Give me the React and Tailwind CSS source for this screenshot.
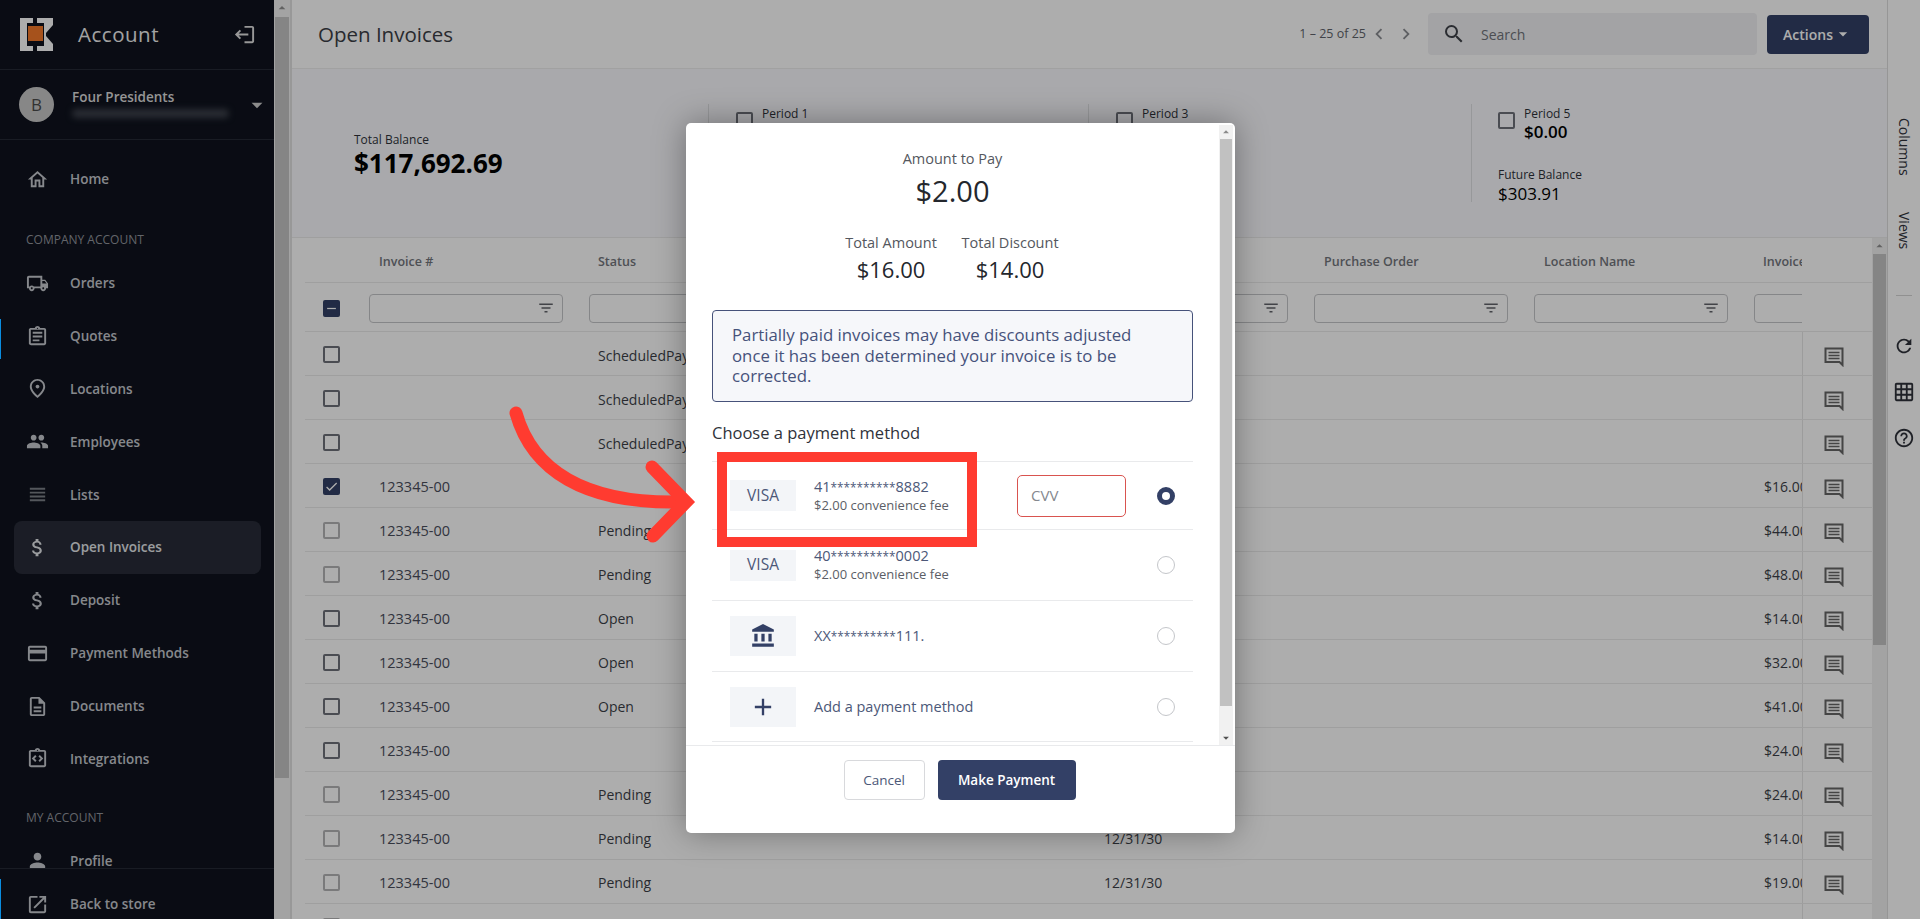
import React from 'react'
import {
  MdOutlineHome, MdOutlineLocalShipping, MdOutlineAssignment, MdOutlinePlace, MdPeople,
  MdOutlineViewHeadline, MdAttachMoney, MdOutlineCreditCard, MdOutlineDescription,
  MdOutlineIntegrationInstructions, MdPerson, MdOpenInNew, MdFilterList,
  MdAccountBalance, MdAdd, MdRefresh, MdOutlineGridOn, MdHelpOutline, MdSearch, MdLogout,
  MdChevronLeft, MdChevronRight, MdArrowDropDown, MdCheck, MdRemove, MdArrowDropUp,
} from 'react-icons/md'

const companyNav = [
  { label: 'Orders', Icon: MdOutlineLocalShipping },
  { label: 'Quotes', Icon: MdOutlineAssignment },
  { label: 'Locations', Icon: MdOutlinePlace },
  { label: 'Employees', Icon: MdPeople },
  { label: 'Lists', Icon: MdOutlineViewHeadline, iconClass: 'opacity-60' },
  { label: 'Open Invoices', Icon: MdAttachMoney, active: true },
  { label: 'Deposit', Icon: MdAttachMoney },
  { label: 'Payment Methods', Icon: MdOutlineCreditCard },
  { label: 'Documents', Icon: MdOutlineDescription },
  { label: 'Integrations', Icon: MdOutlineIntegrationInstructions },
]

const rows = [
  { box: 'dark', status: 'ScheduledPayment' },
  { box: 'dark', status: 'ScheduledPayment' },
  { box: 'dark', status: 'ScheduledPayment' },
  { box: 'checked', inv: '123345-00', amt: '$16.00' },
  { box: 'faded', inv: '123345-00', status: 'Pending', amt: '$44.00' },
  { box: 'faded', inv: '123345-00', status: 'Pending', amt: '$48.00' },
  { box: 'dark', inv: '123345-00', status: 'Open', amt: '$14.00' },
  { box: 'dark', inv: '123345-00', status: 'Open', amt: '$32.00' },
  { box: 'dark', inv: '123345-00', status: 'Open', amt: '$41.00' },
  { box: 'dark', inv: '123345-00', amt: '$24.00' },
  { box: 'faded', inv: '123345-00', status: 'Pending', date: '12/31/30', amt: '$24.00' },
  { box: 'faded', inv: '123345-00', status: 'Pending', date: '12/31/30', amt: '$14.00' },
  { box: 'faded', inv: '123345-00', status: 'Pending', date: '12/31/30', amt: '$19.00' },
  { box: 'faded', inv: '123345-00', status: 'Pending', date: '12/31/30', amt: '$19.00' },
]

function Logo() {
  return (
    <svg width="33" height="33" viewBox="0 0 33 33" className="shrink-0">
      <path d="M0 0H13V5H7V28H13V33H0Z" fill="#ffffff" />
      <path d="M17 0H33V7L26 15V18L33 26V33H17V28H24V5H17Z" fill="#ffffff" />
      <rect x="8" y="8" width="15" height="15" fill="#f5792a" />
    </svg>
  )
}

// square speech bubble with three lines and the tail at the lower right
function NoteIcon() {
  return (
    <svg width="20" height="20" viewBox="0 0 20 20" fill="none" stroke="currentColor">
      <path d="M1.5 1.5H18.5V18L15.5 15H1.5Z" strokeWidth="2" />
      <path d="M4.5 5.5H15.5M4.5 8.5H15.5M4.5 11.5H15.5" strokeWidth="1.5" />
    </svg>
  )
}

function NavItem({ label, Icon, active, iconClass }) {
  return (
    <div className={active
      ? 'ml-[14px] w-[247px] h-[52.85px] pl-[12px] flex items-center rounded-lg bg-[#282c38] text-[#e5e7eb]'
      : 'ml-[14px] w-[247px] h-[52.85px] pl-[12px] flex items-center text-[#c6c9cf]'}>
      <Icon size={23} className={iconClass ? 'shrink-0 ' + iconClass : 'shrink-0'} />
      <span className="ml-[21px] text-[13.5px] font-semibold">{label}</span>
    </div>
  )
}

function Sidebar() {
  return (
    <aside className="relative w-[274px] shrink-0 h-full flex flex-col bg-[#0f131e]">
      <div className="h-[70px] shrink-0 border-b border-[#262a35] flex items-center pl-[20px] pr-[18px]">
        <Logo />
        <span className="ml-[25px] text-[20.5px] text-[#f0f0f0] tracking-wide">Account</span>
        <MdLogout size={23} className="ml-auto -scale-x-100 text-[#e0e0e0]" />
      </div>
      <div className="h-[70px] shrink-0 border-b border-[#262a35] flex items-center pl-[19px] pr-[4px]">
        <div className="w-[35px] h-[35px] rounded-full bg-[#c8c8c8] flex items-center justify-center text-[#4b4b4b] text-[17px]">B</div>
        <div className="ml-[18px] mb-[3px] flex flex-col">
          <span className="text-[13.5px] font-semibold text-[#dcdcdc] leading-[18px]">Four Presidents</span>
          <span className="mt-[3px] w-[157px] h-[9px] rounded-full bg-[#3e424c] blur-[3px]"></span>
        </div>
        <MdArrowDropDown size={26} className="ml-auto text-[#cfcfcf]" />
      </div>
      <nav className="flex-1 overflow-hidden pt-[13px]">
        <NavItem label="Home" Icon={MdOutlineHome} />
        <div className="h-[51px] pt-[22px] pl-[26px] text-[12px] leading-[24px] text-[#92959d]">COMPANY ACCOUNT</div>
        {companyNav.map(item => <NavItem key={item.label} {...item} />)}
        <div className="h-[49px] pt-[21px] pl-[26px] text-[12px] leading-[24px] text-[#92959d]">MY ACCOUNT</div>
        <NavItem label="Profile" Icon={MdPerson} />
      </nav>
      <div className="h-[51px] shrink-0 border-t border-[#262a35] pt-[9px]">
        <NavItem label="Back to store" Icon={MdOpenInNew} />
      </div>
      {/* bright markers stay above the dimmer */}
      <div className="absolute left-0 top-[319px] w-[1px] h-[40px] bg-[#0a8de0] z-20"></div>
      <div className="absolute left-0 top-[879px] w-[1px] h-[40px] bg-[#0a8de0] z-20"></div>
    </aside>
  )
}

function ScrollTrack({ thumbTop, thumbHeight, className }) {
  return (
    <div className={className}>
      <div className="h-[16px] flex items-center justify-center text-[#8f8f8f]"><MdArrowDropUp size={16} /></div>
      <div className="mx-[1px] bg-[#c4c4c4]" style={{ marginTop: thumbTop, height: thumbHeight }}></div>
    </div>
  )
}

function Checkbox({ kind }) {
  if (kind === 'checked') {
    return <span className="shrink-0 w-[17px] h-[17px] rounded-[2px] bg-[#334066] flex items-center justify-center text-white"><MdCheck size={15} /></span>
  }
  if (kind === 'minus') {
    return <span className="shrink-0 w-[17px] h-[17px] rounded-[2px] bg-[#334066] flex items-center justify-center text-white"><MdRemove size={15} /></span>
  }
  if (kind === 'faded') {
    return <span className="block shrink-0 w-[17px] h-[17px] rounded-[2px] border-2 border-[#b4b4b6]"></span>
  }
  return <span className="block shrink-0 w-[17px] h-[17px] rounded-[2px] border-2 border-[#6d7079]"></span>
}

function FilterInput() {
  return (
    <div className="w-[194px] h-[29px] rounded-[4px] border border-[#c5c6c9] flex items-center justify-end pr-[7px] text-[#62646a]">
      <MdFilterList size={18} />
    </div>
  )
}

function Columns({ children }) {
  return <div className="flex w-[1497px] shrink-0">{children}</div>
}

function InvoiceTable() {
  return (
    <div className="flex-1 min-h-0 flex overflow-hidden">
      <div className="flex-1 min-w-0 pl-[13px]">
        <div className="flex h-[45px] border-b border-[#ebebeb] items-center pt-[4px] text-[12.5px] font-semibold text-[#73767d]">
          <div className="flex-1 min-w-0 overflow-hidden pl-[64px]">
            <Columns>
              <div className="w-[220px] pl-[10px]">Invoice #</div>
              <div className="w-[220px] pl-[9px]">Status</div>
              <div className="w-[285px] pl-[10px]">Due Date</div>
              <div className="w-[220px] pl-[10px]">Invoice Date</div>
              <div className="w-[220px] pl-[10px]">Purchase Order</div>
              <div className="w-[220px] pl-[10px]">Location Name</div>
              <div className="w-[112px] pl-[9px]">Invoice Amount</div>
            </Columns>
          </div>
          <div className="w-[70px] shrink-0"></div>
        </div>
        <div className="flex h-[49px] border-b border-[#ebebeb] items-center pt-[2px]">
          <div className="w-[64px] shrink-0 pl-[18px] flex"><Checkbox kind="minus" /></div>
          <div className="flex-1 min-w-0 overflow-hidden">
            <Columns>
              <div className="w-[220px]"><FilterInput /></div>
              <div className="w-[505px]"><FilterInput /></div>
              <div className="w-[220px]"><FilterInput /></div>
              <div className="w-[220px]"><FilterInput /></div>
              <div className="w-[220px]"><FilterInput /></div>
              <div className="w-[112px]"><FilterInput /></div>
            </Columns>
          </div>
          <div className="w-[70px] shrink-0"></div>
        </div>
        {rows.map((r, idx) => (
          <div key={idx} className="flex h-[44px] border-b border-[#ebebeb] items-center text-[14px] text-[#3c3f48]">
            <div className="w-[64px] shrink-0 pl-[18px] pt-[1px] flex"><Checkbox kind={r.box} /></div>
            <div className="flex-1 min-w-0 overflow-hidden pt-[3px]">
              <Columns>
                <div className="w-[220px] pl-[10px] text-[14.5px] text-[#4a4e5c]">{r.inv}</div>
                <div className="w-[505px] pl-[9px]">{r.status}</div>
                <div className="w-[220px] pl-[10px]">{r.date}</div>
                <div className="w-[220px]"></div>
                <div className="w-[220px]"></div>
                <div className="w-[112px] pl-[10px]">{r.amt}</div>
              </Columns>
            </div>
            <div className="w-[70px] shrink-0 border-l border-[#e6e6e6] h-full pl-[21px] pt-[6px] flex items-center text-[#666666]">
              <NoteIcon />
            </div>
          </div>
        ))}
      </div>
      <ScrollTrack className="w-[15px] shrink-0 bg-[#f1f1f1]" thumbTop={0} thumbHeight={391} />
    </div>
  )
}

function Main() {
  return (
    <main className="flex-1 min-w-0 h-full flex flex-col border-l-2 border-[#e0e0e0]">
      <header className="h-[69px] shrink-0 border-b border-[#ededed] flex items-center pl-[26px] pr-[18px] bg-white">
        <h1 className="text-[20.5px] text-[#3b3e46]">Open Invoices</h1>
        <span className="ml-auto text-[12.5px] text-[#60636a]">1 – 25 of 25</span>
        <MdChevronLeft size={22} className="ml-[2px] text-[#8b8d92]" />
        <MdChevronRight size={22} className="ml-[5px] text-[#8b8d92]" />
        <div className="ml-[11px] w-[329px] h-[42px] bg-[#f0f1f3] rounded-[4px] flex items-center pl-[14px] text-[14px] text-[#70737a]">
          <MdSearch size={24} className="text-[#3e4149]" />
          <span className="ml-[15px]">Search</span>
        </div>
        <button className="ml-[10px] w-[102px] h-[39px] rounded-[4px] bg-[#334066] text-white text-[14px] font-semibold flex items-center justify-center">
          Actions<MdArrowDropDown size={20} />
        </button>
      </header>
      <section className="h-[169px] shrink-0 border-b border-[#ebebeb] bg-[#f9fafe] flex items-center">
        <div className="w-[416px] pl-[62px] pt-[3px]">
          <div className="text-[12px] text-[#2f323a] leading-[16px]">Total Balance</div>
          <div className="text-[26px] font-bold text-black leading-[30px]">$117,692.69</div>
        </div>
        <div className="w-[380px] h-[98px] border-l border-[#dfe0e3] pl-[27px] flex items-start pt-[2px]">
          <span className="mt-[6px]"><Checkbox kind="dark" /></span>
          <div className="ml-[9px] text-[12px] text-[#2f323a] leading-[16px]">Period 1<div className="text-[17px] font-semibold">$0.00</div></div>
        </div>
        <div className="w-[383px] h-[98px] border-l border-[#dfe0e3] pl-[27px] flex items-start pt-[2px]">
          <span className="mt-[6px]"><Checkbox kind="dark" /></span>
          <div className="ml-[9px] text-[12px] text-[#2f323a] leading-[16px]">Period 3<div className="text-[17px] font-semibold">$0.00</div></div>
        </div>
        <div className="h-[98px] border-l border-[#dfe0e3] pl-[26px] pt-[2px]">
          <div className="flex items-start">
            <span className="mt-[6px]"><Checkbox kind="dark" /></span>
            <div className="ml-[9px]">
              <div className="text-[12px] text-[#2f323a] leading-[16px]">Period 5</div>
              <div className="text-[17px] font-semibold text-black leading-[20px]">$0.00</div>
            </div>
          </div>
          <div className="mt-[25px] text-[12px] text-[#2f323a] leading-[16px]">Future Balance</div>
          <div className="text-[17px] text-black leading-[22px]">$303.91</div>
        </div>
      </section>
      <InvoiceTable />
    </main>
  )
}

function RightRail() {
  return (
    <div className="w-[33px] shrink-0 h-full border-l border-[#dedede] flex flex-col items-center text-[#2f323a]">
      <div className="mt-[118px] [writing-mode:vertical-rl] text-[14px] h-[55px]">Columns</div>
      <div className="mt-[39px] [writing-mode:vertical-rl] text-[14px] h-[37px]">Views</div>
      <div className="mt-[46px] w-[16px] h-[1px] bg-[#d4d4d4]"></div>
      <MdRefresh size={22} className="mt-[39px]" />
      <MdOutlineGridOn size={22} className="mt-[24px]" />
      <MdHelpOutline size={22} className="mt-[24px]" />
    </div>
  )
}

function Radio({ selected }) {
  return selected
    ? <span className="block shrink-0 w-[18px] h-[18px] rounded-full border-[5px] border-[#334066] bg-white"></span>
    : <span className="block shrink-0 w-[18px] h-[18px] rounded-full border border-[#c4c6ca] bg-white"></span>
}

function MethodTile({ children }) {
  return <div className="w-[66px] flex items-center justify-center bg-[#f3f5f8] text-[#4c5878] text-[15.5px]">{children}</div>
}

// masked numbers: the stars run smaller than the digits
function Masked({ start, end }) {
  return (
    <div className="text-[14.5px] text-[#4c5878]">
      {start}<span className="text-[11.8px]">**********</span>{end}
    </div>
  )
}

function PaymentModal() {
  return (
    <div className="absolute inset-0 z-10 bg-[rgba(0,0,0,0.32)] flex items-start justify-center pt-[123px] pl-[1px]">
      <div className="w-[549px] h-[710px] bg-white rounded-[5px] shadow-[0_0_32px_rgba(0,0,0,0.35)] flex flex-col font-['Open_Sans',sans-serif]">
        <div className="h-[622px] flex pr-[2px] pt-[2px]">
          <div className="flex-1 min-w-0 overflow-hidden px-[26px]">
            <div className="text-center pt-[25px]">
              <div className="text-[14.5px] text-[#54575e] leading-[18px]">Amount to Pay</div>
              <div className="text-[29px] font-medium text-[#24272d] leading-[40px] mt-[3px]">$2.00</div>
            </div>
            <div className="flex justify-center gap-[23px] mt-[23px] pr-[3px]">
              <div className="text-center w-[95px]">
                <div className="text-[14.5px] text-[#54575e] leading-[18px] whitespace-nowrap">Total Amount</div>
                <div className="text-[22px] font-medium text-[#24272d] leading-[30px] mt-[2px]">$16.00</div>
              </div>
              <div className="text-center w-[97px]">
                <div className="text-[14.5px] text-[#54575e] leading-[18px] whitespace-nowrap">Total Discount</div>
                <div className="text-[22px] font-medium text-[#24272d] leading-[30px] mt-[2px]">$14.00</div>
              </div>
            </div>
            <div className="mt-[26px] h-[92px] rounded-[4px] border border-[#46527a] bg-[#f6f7fa] pl-[19px] pr-[40px] flex items-center text-[16.8px] font-medium leading-[20.5px] text-[#46527a]">
              Partially paid invoices may have discounts adjusted once it has been determined your invoice is to be corrected.
            </div>
            <div className="mt-[20px] text-[16.5px] font-medium text-[#2f323a] leading-[22px]">Choose a payment method</div>
            <div className="mt-[17px] border-t border-[#e9eaec]">
              <div className="h-[68px] border-b border-[#e9eaec] flex items-center pl-[18px] pr-[18px]">
                <div className="h-[31px] flex"><MethodTile>VISA</MethodTile></div>
                <div className="ml-[18px] leading-[18px]">
                  <Masked start="41" end="8882" />
                  <div className="text-[13px] text-[#5b5e66]">$2.00 convenience fee</div>
                </div>
                <div className="ml-auto mr-[31px] w-[109px] h-[42px] rounded-[5px] border border-[#d9534f] pl-[13px] flex items-center text-[15px] text-[#85888e]">CVV</div>
                <Radio selected />
              </div>
              <div className="h-[71px] border-b border-[#e9eaec] flex items-center pl-[18px] pr-[18px]">
                <div className="h-[31px] flex"><MethodTile>VISA</MethodTile></div>
                <div className="ml-[18px] leading-[18px]">
                  <Masked start="40" end="0002" />
                  <div className="text-[13px] text-[#5b5e66]">$2.00 convenience fee</div>
                </div>
                <span className="ml-auto"><Radio /></span>
              </div>
              <div className="h-[71px] border-b border-[#e9eaec] flex items-center pl-[18px] pr-[18px]">
                <div className="h-[40px] flex"><MethodTile><MdAccountBalance size={26} className="text-[#334066]" /></MethodTile></div>
                <div className="ml-[18px]"><Masked start="XX" end="111." /></div>
                <span className="ml-auto"><Radio /></span>
              </div>
              <div className="h-[70px] border-b border-[#e9eaec] flex items-center pl-[18px] pr-[18px]">
                <div className="h-[40px] flex"><MethodTile><MdAdd size={28} className="text-[#334066]" /></MethodTile></div>
                <div className="ml-[18px] text-[14.5px] text-[#4c5878]">Add a payment method</div>
                <span className="ml-auto"><Radio /></span>
              </div>
            </div>
          </div>
          <div className="w-[14px] shrink-0 bg-[#f1f1f1] flex flex-col relative">
            <div className="h-[14px] flex items-center justify-center text-[#8a8a8a]"><MdArrowDropUp size={16} /></div>
            <div className="mx-[1px] h-[567px] bg-[#c1c1c1]"></div>
            <div className="mt-auto h-[14px] flex items-center justify-center text-[#505050]"><MdArrowDropDown size={16} /></div>
          </div>
        </div>
        <div className="flex-1 border-t border-[#e9eaec] flex items-start justify-center gap-[13px] pt-[14px] pr-[2px]">
          <button className="w-[81px] h-[40px] rounded-[4px] border border-[#d8d9dc] bg-white text-[13.5px] font-medium text-[#4c5878]">Cancel</button>
          <button className="w-[138px] h-[40px] rounded-[4px] bg-[#334066] text-white text-[13.5px] font-semibold">Make Payment</button>
        </div>
      </div>
    </div>
  )
}

function Annotation() {
  return (
    <>
      <div className="absolute z-20 left-[717px] top-[452px] w-[260px] h-[95px] border-[10px] border-[#ff3b30]"></div>
      <svg className="absolute z-20 left-0 top-0" width="1920" height="919" fill="none">
        <path d="M516 413C532 470 584 504 680 502" stroke="#ff3b30" strokeWidth="13" strokeLinecap="round" />
        <path d="M652 467L686 502L653 536" stroke="#ff3b30" strokeWidth="13" strokeLinecap="round" />
      </svg>
    </>
  )
}

export default function App() {
  return (
    <div className="relative w-[1920px] h-[919px] overflow-hidden flex bg-white font-['Open_Sans',sans-serif]">
      <Sidebar />
      <ScrollTrack className="w-[16px] shrink-0 h-full bg-[#f1f1f1]" thumbTop={1} thumbHeight={761} />
      <Main />
      <RightRail />
      <PaymentModal />
      <Annotation />
    </div>
  )
}
